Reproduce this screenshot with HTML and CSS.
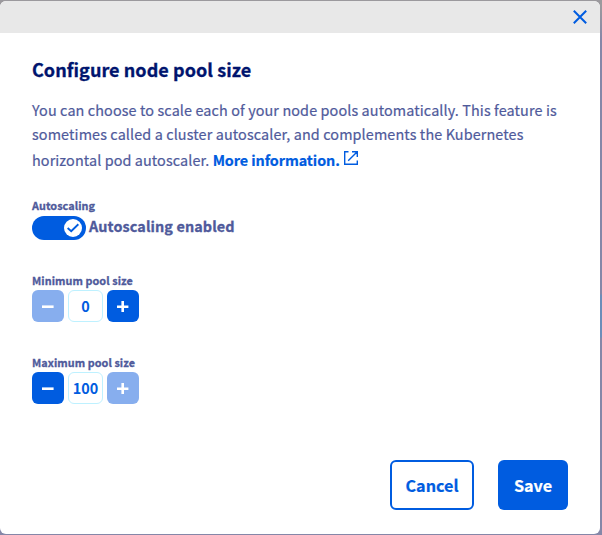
FILE: index.html
```html
<!DOCTYPE html>
<html lang="en">
<head>
<meta charset="utf-8">
<title>Configure node pool size</title>
<link rel="stylesheet" href="styles.css">
</head>
<body>
<div class="modal" role="dialog">
  <header class="modal-header">
    <button class="close" aria-label="Close"><svg width="14" height="14" viewBox="0 0 14 14"><path d="M.8 .8L13.2 13.2M13.2 .8L.8 13.2"/></svg></button>
  </header>
  <main class="modal-body">
    <h1 class="title">Configure node pool size</h1>
    <p class="description">
      <span class="line">You can choose to scale each of your node pools automatically. This feature is</span>
      <span class="line">sometimes called a cluster autoscaler, and complements the Kubernetes</span>
      <span class="line last">horizontal pod autoscaler. <a class="link">More information.<svg class="external" width="14" height="14" viewBox="0 0 14 14"><path d="M4.5 .7H.7V13.3H13.3V9.5M8 .7H13.3V6M13 1L4.2 9.8"/></svg></a></span>
    </p>
    <section class="field autoscaling">
      <div class="label">Autoscaling</div>
      <div class="toggle-row">
        <span class="toggle"><span class="knob"><svg width="12" height="10" viewBox="0 0 12 10"><path d="M.6 5L4.2 8.2L11.4 1.3"/></svg></span></span>
        <span class="toggle-text">Autoscaling enabled</span>
      </div>
    </section>
    <section class="field minimum">
      <div class="label">Minimum pool size</div>
      <div class="stepper">
        <button class="step disabled" aria-label="Decrease"><svg width="12" height="12" viewBox="0 0 12 12"><path d="M0 6.7H11.6"/></svg></button>
        <span class="value">0</span>
        <button class="step" aria-label="Increase"><svg width="12" height="12" viewBox="0 0 12 12"><path d="M0 6.7H11.4M5.7 .9V12"/></svg></button>
      </div>
    </section>
    <section class="field maximum">
      <div class="label">Maximum pool size</div>
      <div class="stepper">
        <button class="step" aria-label="Decrease"><svg width="12" height="12" viewBox="0 0 12 12"><path d="M0 6.7H11.6"/></svg></button>
        <span class="value">100</span>
        <button class="step disabled" aria-label="Increase"><svg width="12" height="12" viewBox="0 0 12 12"><path d="M0 6.7H11.4M5.7 .9V12"/></svg></button>
      </div>
    </section>
    <footer class="actions">
      <button class="action cancel">Cancel</button>
      <button class="action save">Save</button>
    </footer>
  </main>
</div>
</body>
</html>
```
FILE: styles.css
```css
* { box-sizing: border-box; }
body {
  margin: 0;
  height: 535px;
  overflow: hidden;
  padding: 1px 2px 1px 0;
  background: linear-gradient(#9b999d 0, #9b999d 6px, #8587a8 40px, #8587a8 294px, #6c8db9 295px, #6c8db9 337px, #8587a8 338px);
  font-family: "Noto Sans CJK SC", "Noto Sans", sans-serif;
  color: #4f5a9b;
}
button { font: inherit; padding: 0; border: 0; }
svg { display: block; fill: none; stroke: currentColor; }
.modal {
  display: flex;
  flex-direction: column;
  height: 533px;
  background: #fff;
  border-radius: 6px;
  overflow: hidden;
}
.modal-header {
  display: flex;
  justify-content: flex-end;
  align-items: center;
  height: 32px;
  padding-right: 13px;
  background: #e8e8e8;
}
.close { color: #005ce0; background: none; stroke-width: 2; }
.modal-body { display: flex; flex-direction: column; flex: 1; padding: 24px 32px 24px; }
.title { margin: 0; font-size: 18px; line-height: 24px; font-weight: 700; letter-spacing: .06px; color: #00146e; -webkit-text-stroke: .3px currentColor; }
.description { margin: 17px 0 0; font-size: 14.4px; letter-spacing: .11px; -webkit-text-stroke: .2px currentColor; }
.line { display: block; line-height: 24px; white-space: nowrap; }
.last { line-height: 28px; letter-spacing: .09px; }
.link { color: #005ce0; font-weight: 700; letter-spacing: -.08px; }
.external { display: inline-block; margin-left: 4.5px; vertical-align: 1px; stroke-width: 1.4; }
.label { font-size: 10.8px; line-height: 16px; font-weight: 700; letter-spacing: .08px; -webkit-text-stroke: .3px currentColor; }
.autoscaling { margin-top: 23px; }
.toggle-row { display: flex; align-items: center; gap: 3px; height: 26px; margin-top: 1px; }
.toggle {
  display: flex;
  justify-content: flex-end;
  align-items: center;
  width: 54px;
  height: 24px;
  padding-right: 4px;
  margin-top: 2px;
  border-radius: 12px;
  background: #005ce0;
}
.knob { display: grid; place-items: center; width: 18px; height: 18px; border-radius: 50%; background: #fff; color: #005ce0; stroke-width: 2; }
.toggle-text { margin-top: -2px; font-size: 14.4px; line-height: 24px; font-weight: 700; letter-spacing: .11px; -webkit-text-stroke: .3px currentColor; }
.minimum { margin-top: 32px; }
.maximum { margin-top: 32px; }
.stepper { display: flex; gap: 4px; margin-top: 2px; }
.step { display: grid; place-items: center; width: 32px; height: 32px; border-radius: 6px; background: #005ce0; color: #fff; stroke-width: 2.6; }
.disabled { background: #87aeee; }
.value { width: 35px; height: 32px; border: 1px solid #bef1ff; border-radius: 6px; color: #005ce0; font-size: 14.4px; line-height: 29px; font-weight: 700; text-align: center; }
.actions { display: flex; justify-content: flex-end; gap: 24px; margin-top: auto; }
.action { height: 50px; border-radius: 6px; font-size: 16.2px; font-weight: 700; letter-spacing: -.02px; -webkit-text-stroke: .2px currentColor; }
.cancel { width: 84px; border: 2px solid #005ce0; background: #fff; color: #005ce0; }
.save { width: 70px; background: #005ce0; color: #fff; }
```
